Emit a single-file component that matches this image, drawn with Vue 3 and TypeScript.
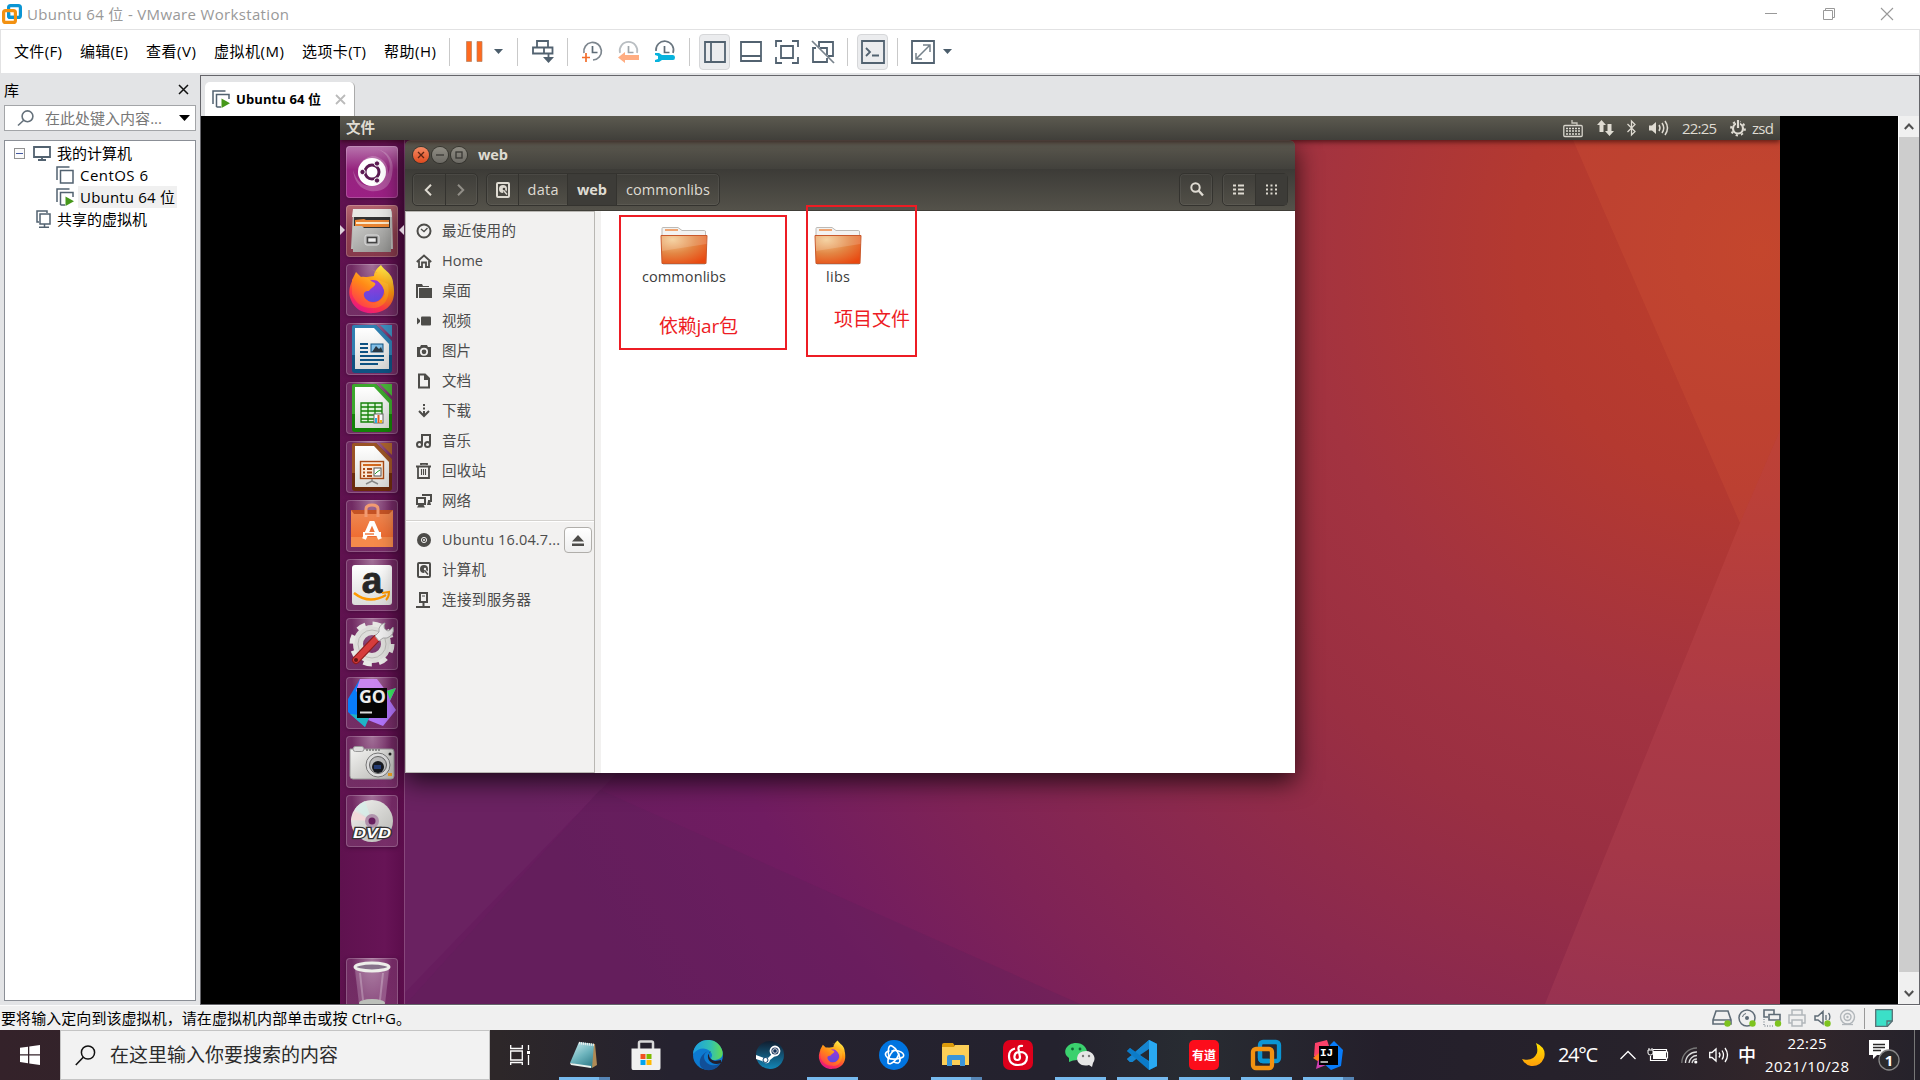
<script setup lang="ts">
import { h } from 'vue'

interface Glyph { w: number; h: number; body: string }
interface Placed { icon: string; gap: number; kind?: string }

const g = (w: number, h: number, body: string): Glyph => ({ w, h, body })
const line = 'fill="none" stroke="#526270" stroke-width="1.8"'
const dark = 'fill="none" stroke="#4d4c49" stroke-width="2"'
const pale = 'fill="none" stroke="#dfdbd2" stroke-width="2"'
const white = 'fill="none" stroke="#fff" stroke-width="1.3"'

const office = (c1: string, c2: string, inner: string) =>
  `<path d="M6 4Q6 2 8 2H30L46 18V47Q46 50 43 50H9Q6 50 6 47Z" fill="${c2}"/><path d="M6 4Q6 2 8 2H30L46 18V32H6Z" fill="${c1}" opacity=".75"/><path d="M34 2H46V14Z" fill="${c1}"/><path d="M9 5H28L43 21V46H9Z" fill="url(#paper)"/>${inner}`

const fox = '<path d="M25 4C30 7 32 10 32 14C38 17 43 22 45 28C50 9 39 8 34 0C30 3 27 7 27 11L6 14C2 22 1 28 4 35C8 45 17 49 27 48C40 47 48 38 47 25C47 15 42 9 38 6C37 9 37 12 38 15Z" fill="url(#fox)"/><circle cx="26" cy="26" r="11" fill="url(#foxball)"/><path d="M5 15L9 7L14 12C18 11 22 13 24 16L28 18C30 21 23 23 22 26C16 25 15 31 20 35C26 41 35 36 38 29C37 20 30 16 29 14L41 19C44 34 36 44 25 43C14 43 8 37 5 29Z" fill="url(#fox2)"/>'

const glyphs: Record<string, Glyph> = {
  vm: g(20, 20, '<rect x="6.6" y="1.6" width="11.8" height="11.8" rx="2" fill="none" stroke="#0b95d3" stroke-width="3.2"/><rect x="1.6" y="6.6" width="11.8" height="11.8" rx="2" fill="none" stroke="#f29111" stroke-width="3.2"/><path d="M6.6 9V11.4Q6.6 13.4 8.6 13.4H12" fill="none" stroke="#0b95d3" stroke-width="3.2"/>'),
  min: g(12, 12, '<path d="M0 5.5H12" stroke="#999"/>'),
  max: g(12, 12, '<path d="M.5 2.5H9.5V11.5H.5ZM2.5 2V.5H11.5V9.5H10" fill="none" stroke="#999"/>'),
  close: g(12, 12, '<path d="M0 0L12 12M12 0L0 12" stroke="#999" stroke-width="1.1"/>'),
  pause: g(17, 21, '<path d="M.5 .5H5.5V20.5H.5ZM11 .5H16V20.5H11Z" fill="#ff6a1f" stroke="#b5805f" stroke-width=".7"/>'),
  caret: g(9, 5, '<path d="M0 0H9L4.5 5Z" fill="#4b5d6b"/>'),
  send: g(22, 23, `<path d="M5 7V1H16V7M1 7.5H20.5V13.5H1ZM12 8V13M16.5 14V21" ${line}/><path d="M11 17H22L16.5 23Z" fill="#4f5f6d"/>`),
  snap: g(21, 22, '<path d="M2 12A8.8 8.8 0 1 1 11 19" fill="none" stroke="#7d868e" stroke-width="1.7"/><path d="M10.5 5V11.5H15.5" fill="none" stroke="#5d6b76" stroke-width="1.7"/><path d="M0 16.5H8M4 12V21" stroke="#f26d2b" stroke-width="1.7"/>'),
  revert: g(21, 22, '<path d="M2 12A8.8 8.8 0 1 1 19 12" fill="none" stroke="#b9bec2" stroke-width="1.7"/><path d="M10.5 5V11.5H15.5" fill="none" stroke="#9ea5aa" stroke-width="1.7"/><path d="M0 16.5L7 11V14H21V19H7V22Z" fill="#ffad82"/>'),
  manage: g(21, 22, '<path d="M2 10A8.8 8.8 0 1 1 19 12" fill="none" stroke="#69757f" stroke-width="1.7"/><path d="M10.5 5V11.5H15.5" fill="none" stroke="#5d6b76" stroke-width="1.7"/><path d="M1 12H5L8 14H19Q21 14 21 16.500T19 19H8L5 21H1V19L4 18V15L1 14Z" fill="#07b3dd"/>'),
  lib: g(22, 22, `<path d="M1 1H21V21H1ZM7 1V21" ${line}/>`),
  thumb: g(22, 22, `<path d="M1 1H21V20H1ZM1 15H21" ${line}/>`),
  full: g(24, 24, `<path d="M1 7V1H7M17 1H23V7M23 17V23H17M7 23H1V17M6 6H18V18H6Z" ${line}/>`),
  unity: g(24, 24, `<path d="M8 7V2H22V16H17M5 8H2V22H16V18M9 8H16V15" ${line}/><path d="M1 1L23 23" stroke="#78838c" stroke-width="1.7"/>`),
  console: g(24, 24, `<path d="M1 1H23V23H1ZM5 8L9 12L5 16M11 15.500H18" ${line}/>`),
  stretch: g(24, 24, `<path d="M1 1H23V23H1Z" ${line}/><path d="M5 19L19 5M12 5H19V12M5 13V19H11" fill="none" stroke="#75818a" stroke-width="1.5"/>`),
  x: g(9, 9, '<path d="M0 0L9 9M9 0L0 9" stroke="#111" stroke-width="1.5"/>'),
  tabx: g(9, 9, '<path d="M0 0L9 9M9 0L0 9" stroke="#bbb" stroke-width="1.8"/>'),
  lens: g(17, 16, '<circle cx="10.5" cy="6.300" r="5.400" fill="none" stroke="#65717b" stroke-width="1.6"/><path d="M7 10L1 15.500" stroke="#65717b" stroke-width="1.600"/>'),
  arrow: g(11, 6, '<path d="M0 0H11L5.5 6Z" fill="#000"/>'),
  minus: g(11, 11, '<rect x=".5" y=".5" width="10" height="10" fill="#fafafa" stroke="#919191"/><path d="M2 5.500H9" stroke="#4257a0"/>'),
  pc: g(18, 15, `<path d="M1 1H17V11H1ZM9 11V14M5 14H13" ${line}/>`),
  guest: g(18, 18, '<path d="M1 14V1H13.500M4.500 4.500H17V17H4.500Z" fill="none" stroke="#526270" stroke-width="1.500"/>'),
  guestOn: g(18, 18, '<path d="M1 14V1H13.500M4.500 17V4.500H17V9M4.500 17H9" fill="none" stroke="#526270" stroke-width="1.500"/><path d="M9.500 8.500L18 13.300L9.500 18Z" fill="#46981a"/>'),
  shared: g(15, 18, '<path d="M3 12H1V1H11V3M4 4H14V14H4ZM8.500 14V17M3 17.200H13" fill="none" stroke="#526270" stroke-width="1.500"/>'),
  // guest panel
  kbd: g(20, 18, '<path d="M9 1V4H14V6" fill="none" stroke="#c9c6bd" stroke-width="1.300"/><rect x=".8" y="6.500" width="18.400" height="11" rx="1" fill="#4a4943" stroke="#d7d4cb" stroke-width="1.300"/><path d="M3 9.500H17M3 12H17M3 15H17" stroke="#dedbd2" stroke-width="1.600" stroke-dasharray="2 1"/>'),
  net: g(17, 16, '<path d="M4.500 0L9 5H6.500V12H2.500V5H0ZM12.500 16L8 11H10.500V4H14.500V11H17Z" fill="#dfdbd2"/>'),
  bt: g(9, 16, '<path d="M.5 4L8 11.500L4.500 15V1L8 4.500L.5 12" fill="none" stroke="#dfdbd2" stroke-width="1.300"/>'),
  sound: g(20, 16, '<path d="M0 5.500H3L7 2V14L3 10.500H0Z" fill="#dfdbd2"/><path d="M10 5Q12 8 10 11M13 3Q16.500 8 13 13M16 1Q21 8 16 15" fill="none" stroke="#dfdbd2" stroke-width="1.500"/>'),
  gear: g(16, 16, '<circle cx="8" cy="8.500" r="5" fill="none" stroke="#dfdbd2" stroke-width="2.200"/><circle cx="8" cy="8.500" r="6.900" fill="none" stroke="#dfdbd2" stroke-width="2" stroke-dasharray="2.300 3.100"/><path d="M6 0H10V8H6Z" fill="#4f4d46"/><path d="M8 0V8" stroke="#dfdbd2" stroke-width="2.200"/>'),
  back: g(8, 12, `<path d="M7 .8L1.800 6L7 11.200" ${pale}/>`),
  next: g(8, 12, '<path d="M1 .8L6.200 6L1 11.200" fill="none" stroke="#918e87" stroke-width="2"/>'),
  disk: g(14, 16, `<rect x="1" y="1" width="12" height="14" rx="1" ${pale}/><circle cx="7" cy="7" r="4" fill="#dfdbd2"/><circle cx="8" cy="7" r="1.300" fill="#45433e"/><path d="M8 9L11 12.500" stroke="#45433e" stroke-width="3"/><path d="M8 9L11 12.500" stroke="#dfdbd2" stroke-width="1.500"/>`),
  find: g(14, 15, `<circle cx="5.500" cy="5.500" r="4.200" ${pale}/><path d="M8.500 8.500L13 13.500" stroke="#dfdbd2" stroke-width="2.400"/>`),
  list: g(11, 11, '<path d="M0 1.500H3M0 5.500H3M0 9.500H3M5 1.500H11M5 5.500H11M5 9.500H11" stroke="#dfdbd2" stroke-width="2"/>'),
  dots: g(11, 11, '<path d="M0 1.500H11M0 5.500H11M0 9.500H11" stroke="#dfdbd2" stroke-width="2" stroke-dasharray="2 2.500"/>'),
  // places
  recent: g(16, 16, '<circle cx="8" cy="8" r="6.500" fill="none" stroke="#4d4c49" stroke-width="2"/><path d="M5 6L8 8.500L11.500 5" fill="none" stroke="#4d4c49" stroke-width="1.300"/>'),
  home: g(16, 16, '<path d="M.8 9L8 2.500L15.200 9" fill="none" stroke="#4d4c49" stroke-width="1.800"/><path d="M3 8V14H6V9.500H10V14H13V8" fill="none" stroke="#4d4c49" stroke-width="1.800"/>'),
  desk: g(16, 16, '<path d="M0 1H6L7 3H13V4H2V15H0Z" fill="#4d4c49"/><path d="M3 5H16V15H3Z" fill="#4d4c49"/>'),
  video: g(16, 16, '<rect x="5" y="3.500" width="10" height="9" rx="1" fill="#4d4c49"/><path d="M1 4.500L4 7V9L1 11.500Z" fill="#4d4c49"/>'),
  photo: g(16, 16, '<path d="M1 4H4L5 2H11L12 4H15V14H1Z" fill="#4d4c49"/><circle cx="8" cy="8.800" r="3.200" fill="none" stroke="#f2f1f0" stroke-width="1.700"/>'),
  doc: g(16, 16, `<path d="M3 1.500H9L13 5.500V14.500H3Z" ${dark}/><path d="M8 1H9L14 6V7H8Z" fill="#4d4c49"/>`),
  down: g(16, 16, `<path d="M3 8L8 13L13 8" ${dark}/><path d="M8 1V3M8 4.500V6.500M8 8V13" ${dark}/>`),
  music: g(16, 16, `<circle cx="3.500" cy="11.500" r="2.500" ${dark}/><circle cx="11.500" cy="11.500" r="2.500" ${dark}/><path d="M6 11V2H14V11" ${dark}/>`),
  bin: g(16, 16, '<path d="M5 2V.8H11V2M0 3.500H15M2 4V15H13V4" fill="none" stroke="#4d4c49" stroke-width="1.800"/><path d="M5.500 6V12M7.500 6V12M9.500 6V12" stroke="#4d4c49" stroke-width="1.100"/>'),
  lan: g(16, 16, '<path d="M7 3V2H15V8H12M1 5H9V11H1Z" fill="none" stroke="#4d4c49" stroke-width="2"/><path d="M3 11H7L9 14.500H1ZM12 8H14L15 12H11Z" fill="#4d4c49"/>'),
  cd: g(16, 16, '<circle cx="8" cy="8" r="7" fill="#4d4c49"/><circle cx="8" cy="8" r="2.600" fill="none" stroke="#f2f1f0"/><circle cx="8" cy="8" r="1" fill="#f2f1f0"/>'),
  hdd: g(16, 16, `<rect x="2" y="1" width="12" height="14" rx="1" ${dark}/><circle cx="8" cy="7" r="4" fill="#4d4c49"/><circle cx="9" cy="7" r="1.200" fill="#f2f1f0"/><path d="M9 9L12 12" stroke="#f2f1f0" stroke-width="3"/><path d="M9 9L12 12.500" stroke="#4d4c49" stroke-width="1.500"/>`),
  server: g(16, 16, `<path d="M4 1H11V10H4ZM7.500 10V14M0 15H14" ${dark}/><path d="M6 4H9" stroke="#4d4c49"/>`),
  eject: g(12, 11, '<path d="M6 0L12 6.500H0ZM0 8.500H12V11H0Z" fill="#4d4c49"/>'),
  folder: g(48, 39, '<path d="M2 9V1.500Q2 .5 3 .5H18L22 3.500H44.500Q45.500 3.500 45.500 5V12H2Z" fill="#f3f3f2" stroke="#bdbab6"/><path d="M5 3H18" stroke="#f0a572" stroke-width="2"/><path d="M3 36.500H45V38H3Z" fill="#bbb" opacity=".6"/><path d="M1 8.500H47L46 36.500H2Z" fill="url(#folder)" stroke="#c9592c"/><path d="M1.500 9H46.500V17L2 24Z" fill="#fff" opacity=".16"/>'),
  // launcher
  ubuntu: g(52, 52, '<path d="M26 10A16 16 0 0 1 42 28A18 18 0 0 0 31 3Q50 8 46 29Q43 47 24 45Q9 42 7 24Q12 40 24 40Q9 34 13 22Q17 11 26 10Z" fill="#fff" opacity=".22"/><circle cx="26" cy="26" r="14" fill="#fff"/><circle cx="26" cy="26" r="7" fill="none" stroke="#5b1a52" stroke-width="3"/><g fill="#5b1a52" stroke="#fff"><circle cx="16.500" cy="26" r="2.700"/><circle cx="31" cy="17.500" r="2.700"/><circle cx="31" cy="34.500" r="2.700"/></g>'),
  files: g(52, 52, '<path d="M7 6Q7 4 9 4H43Q45 4 46 7L47 44H5Z" fill="#b9b9b7"/><path d="M7 4H45L46 12H6Z" fill="#e8e8e5"/><path d="M8 12H44V24H8Z" fill="#333"/><path d="M9 15L18 14L20 15H43V22H9Z" fill="#e98533"/><path d="M10 17H43V19H10Z" fill="#fbe8ca"/><path d="M7 21H16L18 23H45V47H7Z" fill="url(#steel)"/><rect x="19" y="30" width="14" height="10" rx="2" fill="#aaa" stroke="#ddd"/><rect x="21.500" y="32.500" width="9" height="5" fill="#eee" stroke="#444" stroke-width="1.500"/>'),
  firefox: g(52, 52, `<g transform="translate(1 1)">${fox}</g>`),
  writer: g(52, 52, office('#3c8fc0', '#0e5282', '<path d="M14 21H22M14 25H22M14 29H22M14 33H38M14 37H38M14 41H32" stroke="#0e5282" stroke-width="2"/><rect x="25" y="21" width="12" height="8" fill="#83c0e8" stroke="#0e5282"/><path d="M26 29L30 23L33 26L35 24L37 29Z" fill="#2b3944"/>')),
  calc: g(52, 52, office('#49b539', '#148108', '<path d="M15 21H36V40H15ZM15 25H36M15 29H36M15 33H36M15 37H36M22 21V40M29 21V40" fill="#dff3da" stroke="#148108" stroke-width="1.300"/><rect x="28" y="32" width="9" height="9" fill="#fff" stroke="#666"/><path d="M30 41V36" stroke="#29abe2" stroke-width="2"/><path d="M32.500 41V33" stroke="#df6020" stroke-width="2"/><path d="M35 41V38" stroke="#f1b51b" stroke-width="2"/>')),
  impress: g(52, 52, office('#aa622d', '#6c2b0c', '<rect x="14.500" y="20.500" width="23" height="17" fill="#fae7d5" stroke="#a94a16" stroke-width="1.400"/><path d="M17 24H35" stroke="#d2691e" stroke-width="2"/><path d="M17 28H26M17 31.500H26M17 35H26" stroke="#a94a16" stroke-width="2" stroke-dasharray="2 2 9"/><rect x="28" y="27" width="7" height="8" fill="#fff" stroke="#555"/><path d="M29 33L31 31L34 29" fill="none" stroke="#27a02b"/><path d="M26 38V40L20 43M26 40L32 43" fill="none" stroke="#888" stroke-width="1.500"/>')),
  store: g(52, 52, '<path d="M5 10H47V47H5Z" fill="url(#bag)"/><path d="M5 10H47L43 14H8Z" fill="#c45325"/><path d="M20 17V9Q20 5 26 5T32 9V17" fill="none" stroke="#f29b72" stroke-width="3"/><path d="M5 37H47V47H5Z" fill="#f58a4b"/><path d="M18 39L25 23H27L34 39" fill="none" stroke="#fff" stroke-width="4"/><path d="M17 34H35" stroke="#fff" stroke-width="4"/><path d="M19 34H28" stroke="#ed6a28" stroke-width="1.300"/>'),
  amazon: g(52, 52, '<rect x="6" y="6" width="40" height="40" rx="3" fill="url(#paper)"/><text x="26" y="33.500" text-anchor="middle" font-family="Liberation Sans" font-weight="700" font-size="37" fill="#272727" stroke="#272727" stroke-width=".8">a</text><path d="M8 34Q23 46 40 36" fill="none" stroke="#f90" stroke-width="2.500"/><path d="M36 34L43 33Q43 38 40 41" fill="none" stroke="#f90" stroke-width="2"/>'),
  tools: g(52, 52, '<circle cx="26" cy="26" r="14" fill="none" stroke="#dededb" stroke-width="10"/><circle cx="26" cy="26" r="20" fill="none" stroke="#e8e8e5" stroke-width="5" stroke-dasharray="8.500 7.200"/><circle cx="26" cy="26" r="14" fill="none" stroke="#bcbcb8"/><path d="M30 21L10 42" stroke="#8f1d1d" stroke-width="8" stroke-linecap="round"/><path d="M30 21L10 42" stroke="#d63c3c" stroke-width="5.800" stroke-linecap="round"/><path d="M29 18L33 14Q32 7 39 5Q36 11 42 13Q45 12 47 9Q49 17 41 20L37 20L33 23Z" fill="#eee" stroke="#aaa"/><circle cx="10" cy="42" r="2" fill="#641515"/>'),
  goland: g(52, 52, '<path d="M2 22L14 2H29L24 34L19 50L2 35Z" fill="#087cfa"/><path d="M14 2H31L40 14L28 30L10 14Z" fill="#c986ef"/><path d="M36 15L50 11L44 24L50 33L37 49L22 43Z" fill="#b074f9"/><path d="M41 14L50 11L44 23Z" fill="#3bea62"/><path d="M4 37L24 39L19 50Z" fill="#20b5c5"/><path d="M11 11H41V41H11Z" fill="#050505"/><text x="13" y="26" font-family="Open Sans" font-weight="700" font-size="17.500" textLength="27" lengthAdjust="spacingAndGlyphs" fill="#eee">GO</text><path d="M14 35.500H26" stroke="#ddd" stroke-width="2"/>'),
  camera: g(52, 52, '<path d="M4 13H46Q48 13 48 16V40Q48 43 45 43H7Q4 43 4 40Z" fill="url(#steel2)" stroke="#999"/><rect x="7" y="10.500" width="11" height="5" rx="2.500" fill="#ddd" stroke="#999"/><path d="M20 14H35" stroke="#777" stroke-width="1.500" stroke-dasharray="2 1"/><circle cx="32" cy="29" r="12" fill="#ddd" stroke="#777"/><circle cx="32" cy="29" r="8.500" fill="#bbb" stroke="#666"/><circle cx="32" cy="31" r="6" fill="#17191f"/><path d="M28 29H35V33H28Z" fill="#253c74"/><circle cx="44" cy="18" r="1.500" fill="#222"/><path d="M42 37H46V40H42Z" fill="#eb9e24"/>'),
  dvd: g(52, 52, '<circle cx="26" cy="26" r="21" fill="url(#steel2)"/><path d="M26 26L9 14Q13 9 19 6Z" fill="#d4f0ea" opacity=".7"/><path d="M26 26L8 16L5 25Z" fill="#f2d9d9"/><circle cx="26" cy="26" r="7" fill="#b093ac"/><circle cx="26" cy="26" r="3.500" fill="#692160"/><text x="7" y="43" font-family="Liberation Sans" font-weight="700" font-style="italic" font-size="15" textLength="38" lengthAdjust="spacingAndGlyphs" fill="#fff" stroke="#333" stroke-width="2.500" paint-order="stroke">DVD</text>'),
  trash: g(52, 52, '<path d="M9 12L13 46H39L43 12Z" fill="#d7bdd4" opacity=".3"/><ellipse cx="26" cy="9" rx="17" ry="4" fill="#87718a" stroke="#eeeeea" stroke-width="3"/><ellipse cx="26" cy="45" rx="13" ry="4" fill="#bcc0ba"/><path d="M14 15L17 42M37 15L34 42" stroke="#fff" opacity=".25" stroke-width="2"/>'),
  // host taskbar
  start: g(20, 20, '<path d="M0 2.800L8 1.700V9.300H0ZM9.300 1.500L20 0V9.300H9.300ZM0 10.500H8V18.200L0 17ZM9.300 10.500H20V20L9.300 18.400Z" fill="#fff"/>'),
  tbLens: g(21, 21, '<circle cx="13" cy="7.500" r="6.600" fill="none" stroke="#111" stroke-width="1.500"/><path d="M8.500 12L.8 20" stroke="#111" stroke-width="1.600"/>'),
  view: g(20, 20, `<path d="M.7 0V3.500H12.300V0M.7 6H12.300V15H.7ZM.7 20V17.500H12.300V20M18.500 0V5M18.500 10V20" ${white}/><path d="M17 6H20V9H17Z" fill="#fff"/>`),
  note: g(30, 30, '<path d="M10 3L26 4L28 25L23 28Z" fill="#af8a55"/><path d="M10 2L25 4L23 28L1 23Z" fill="url(#note)"/><path d="M10 3L25 5" stroke="#eee" stroke-width="2.500" stroke-dasharray="1 1"/><path d="M1 23L22 26V28L2 25Z" fill="#e9f2ee"/>'),
  shop: g(30, 30, '<path d="M8 9V3Q8 1.500 9.500 1.500H20.500Q22 1.500 22 3V9" fill="none" stroke="#d9d9d9" stroke-width="2.500"/><path d="M.5 8.500H29.500V28Q29.500 30 28 30H2Q.5 30 .5 28Z" fill="#f0f0f0"/><path d="M9.500 14H14.500V19H9.500Z" fill="#f25022"/><path d="M15.500 14H20.500V19H15.500Z" fill="#7fba00"/><path d="M9.500 20H14.500V25H9.500Z" fill="#00a4ef"/><path d="M15.500 20H20.500V25H15.500Z" fill="#ffb900"/>'),
  edge: g(30, 30, '<circle cx="15" cy="15" r="15" fill="#0d7ad0"/><path d="M0 14C1-2 21-4 27 6C33 15 28 20 21 20C17 20 18 18 19 16C20 11 9 3 0 14Z" fill="url(#edge)"/><path d="M17 11C8 12 10 23 18 25C23 26 27 24 28 22C24 31 14 32 9 28C4 23 8 12 17 11Z" fill="#114f98"/><path d="M18 11C14 13 16 20 22 21L28 20V23C20 26 14 21 15 15Z" fill="#231f2d"/>'),
  steam: g(30, 30, '<circle cx="15" cy="15" r="14" fill="url(#steam)"/><circle cx="20" cy="11" r="4.500" fill="#15335c" stroke="#fff" stroke-width="1.800"/><circle cx="20" cy="11" r="2.300" fill="none" stroke="#ddd"/><path d="M1 15L9 18Q12 17 13 18L17 14L20 16L15 20Q14 24 10 23L7 21L1 19Z" fill="#fff"/><circle cx="10.500" cy="20" r="2.500" fill="none" stroke="#17466f" stroke-width="1"/>'),
  fox30: g(30, 30, `<g transform="translate(.5 .5) scale(.59)">${fox}</g>`),
  bnet: g(30, 30, '<circle cx="15" cy="15" r="15" fill="#0074e0"/><g fill="none" stroke="#fff" stroke-width="1.600" stroke-linecap="round"><path d="M10 17C8 10 10 4 13 6C17 8 21 15 21 20"/><path d="M13 11C20 9 27 14 24 17C21 19 13 20 9 18"/><path d="M20 14C18 20 11 26 9 23C8 20 11 14 15 10"/><path d="M10 11C6 12 5 15 9 18M21 20C21 23 19 24 15 22"/></g>'),
  explorer: g(30, 30, '<path d="M1 5Q1 3 3 3H12L14 6V11H1Z" fill="#dc9b0a"/><path d="M14 5H28V25H1V7H13Z" fill="#fccf57"/><path d="M6 26V17Q6 15 8 15H22Q24 15 24 17V26H19V20H11V26Z" fill="#3a95da"/>'),
  cloud: g(30, 30, '<rect width="30" height="30" rx="7" fill="#dd001b"/><path d="M20 6Q15 5 15.500 9L17 17Q17 20 14.500 20Q11 20 11.500 16Q12 12 17 12Q23 12 24 17Q24 25 15 25Q6 25 6 16Q6 10 12 8.500" fill="none" stroke="#fff" stroke-width="2.200"/>'),
  wechat: g(30, 30, '<path d="M11 3C18 3 22 8 22 12Q14 12 12 20Q8 20 4 22L4 18C-4 12 2 3 11 3Z" fill="#3bd16e"/><circle cx="7.500" cy="9" r="1.400" fill="#116736"/><circle cx="15" cy="9" r="1.400" fill="#116736"/><path d="M21 11C28 11 32 18 28 23L27 27L24 25C17 27 12 23 12 18Q13 11 21 11Z" fill="#e6e6e6"/><circle cx="18" cy="16" r="1.200" fill="#777"/><circle cx="24" cy="16" r="1.200" fill="#777"/>'),
  code: g(30, 30, '<path d="M22 0L30 4V26L22 30L0 11L3 8L22 22V0Z" fill="#0876c4"/><path d="M22 0L30 4V26L22 30V22L3 22L0 19L22 0Z" fill="#1685cf"/><path d="M0 19L3 22L22 8V0Z" fill="#1685cf"/><path d="M22 0L30 4V26L22 30Z" fill="#29a9f2"/><path d="M22 9V21L13 15ZM0 13.500L5 15L0 17ZM5 22.500L11 17.500L22 25V30Z" fill="#252a32"/><path d="M0 11L3 8L22 22V30Z" fill="#0b7bc8"/>'),
  youdao: g(30, 30, '<rect width="30" height="30" rx="5" fill="#fc0d1b"/><text x="3" y="19.500" font-family="Noto Sans CJK SC" font-weight="700" font-size="12" textLength="24" fill="#fff">有道</text>'),
  idea: g(30, 30, '<path d="M2 3L14 0L18 12L6 20L1 16Z" fill="#fb4169"/><path d="M0 18L6 13V22Z" fill="#fc801d"/><path d="M5 20L18 23L3 29Z" fill="#ce3eb0"/><path d="M17 5L21 1L30 10L28 26L18 30L10 23Z" fill="#087cfa"/><path d="M6 6H25V25H6Z"/><text x="7" y="16" font-family="Liberation Mono" font-weight="700" font-size="11" fill="#fff">IJ</text><path d="M7.500 22H15" stroke="#eee" stroke-width="1.400"/>'),
  vm30: g(30, 30, '<rect x="9" y="2" width="19" height="19" rx="3" fill="none" stroke="#0b95d3" stroke-width="4.300"/><rect x="2" y="9" width="19" height="19" rx="3" fill="none" stroke="#f29111" stroke-width="4.300"/><path d="M9 12V18Q9 21 12 21H18" fill="none" stroke="#0b95d3" stroke-width="4.300"/>'),
  moon: g(24, 24, '<path d="M14 0Q25 5 22 15Q18 24 9 23Q3 22 0 16Q11 19 15 10Q16 5 14 0Z" fill="url(#moon)"/>'),
  up: g(16, 10, `<path d="M.5 9L8 1.500L15.500 9" ${white}/>`),
  batt: g(20, 14, '<path d="M5 3H18V11H5Z" fill="#fff"/><path d="M5 1.500H18.500V4H19.500V10H18.500V12.500H2.500V8" fill="none" stroke="#fff" stroke-width="1.200"/><path d="M0 2H5V5Q5 7 2.500 7T0 5ZM1 0V2M4 0V2" fill="#242127" stroke="#fff" stroke-width="1"/>'),
  wifi: g(17, 17, '<path d="M.8 16A15 15 0 0 1 16 1" fill="none" stroke="#777" stroke-width="1.300"/><path d="M4.500 16A11 11 0 0 1 16 5M8 16A8 8 0 0 1 16 8.500M11 16A5 5 0 0 1 16 12" fill="none" stroke="#ddd" stroke-width="1.300"/><circle cx="14.800" cy="15" r="1.600" fill="#fff"/>'),
  vol: g(21, 16, `<path d="M.7 5.500H3L7 2V14L3 10.500H.7ZM10 5.500Q12 8 10 10.500M13 3.500Q16 8 13 12.500M16 1Q21 8 16 15" ${white}/>`),
  notif: g(31, 31, '<path d="M0 0H20V15H8L4 19V15H0Z" fill="#fff"/><path d="M4 4.500H16M4 7.500H16M4 10.500H12" stroke="#2a2929" stroke-width="1.400"/><circle cx="20" cy="20" r="10" fill="#2b2b2d" stroke="#888" stroke-width="1.300"/><text x="20" y="25.500" text-anchor="middle" font-family="Open Sans" font-size="15" font-weight="700" fill="#fff">1</text>'),
  // device status
  dHdd: g(20, 18, '<path d="M4 2H16L19 11V15H1V11ZM1 11H19" fill="none" stroke="#5e6b76" stroke-width="1.600"/><circle cx="15.500" cy="14.500" r="3.200" fill="#7dc31e"/>'),
  dCd: g(19, 18, '<circle cx="9" cy="9" r="8" fill="none" stroke="#5e6b76" stroke-width="1.500"/><circle cx="9" cy="9" r="2" fill="#5e6b76"/><path d="M4.500 8Q5 5 8 4.500" fill="none" stroke="#5e6b76"/><circle cx="14.500" cy="14.500" r="3.200" fill="#7dc31e"/>'),
  dNet: g(19, 18, '<path d="M5 8H1V1H11V5M6 5.500H17V11H6Z" fill="none" stroke="#5e6b76" stroke-width="1.600"/><path d="M1 10V17H11" fill="none" stroke="#5e6b76" stroke-dasharray="1 1.500"/><circle cx="15" cy="14.500" r="3.200" fill="#7dc31e"/>'),
  dPrint: g(18, 18, '<path d="M4 6V1H14V6M4 14H1V6H17V14H14M4 11H14V17H4Z" fill="none" stroke="#b1b6ba" stroke-width="1.500"/>'),
  dSound: g(18, 18, '<path d="M1 7H4L9 2.500V15L4 11H1Z" fill="none" stroke="#5e6b76" stroke-width="1.500"/><path d="M12 6V11M14.500 4Q17 7 15 11" fill="none" stroke="#5e6b76" stroke-width="1.300"/><circle cx="13.500" cy="14.500" r="3.200" fill="#7dc31e"/>'),
  dCam: g(17, 18, '<circle cx="8.500" cy="8" r="7" fill="none" stroke="#b1b6ba" stroke-width="1.400"/><circle cx="8.500" cy="8" r="3.500" fill="none" stroke="#b1b6ba" stroke-width="1.400"/><circle cx="8.500" cy="8" r="1.200" fill="#b1b6ba"/><path d="M3 15.500H14" stroke="#b1b6ba" stroke-width="1.300"/>'),
  dNote: g(18, 18, '<path d="M.7 .7H17.300V12L12.500 17.300H.7Z" fill="#3be0c8" stroke="#5a7075" stroke-width="1.300"/><path d="M12 17.500V12H17.500" fill="none" stroke="#5a7075" stroke-width="1.300"/>'),
  sUp: g(10, 7, '<path d="M.8 6L5 1.500L9.200 6" fill="none" stroke="#505050" stroke-width="2"/>'),
  sDown: g(10, 7, '<path d="M.8 1L5 5.500L9.200 1" fill="none" stroke="#505050" stroke-width="2"/>'),
}

const Ico = (p: { n: string }) => {
  const it = glyphs[p.n]
  return h('svg', { width: it.w, height: it.h, viewBox: `0 0 ${it.w} ${it.h}`, class: 'ico', innerHTML: it.body })
}
Ico.props = ['n']

// Tracks a label out (or in) so that its drawn width equals the given one.
const vFit = {
  mounted(el: HTMLElement, b: { value: number }) {
    const n = Array.from(el.textContent ?? '').length
    const natural = el.getBoundingClientRect().width
    const step = n > 1 ? (b.value - natural) / (n - 1) : 0
    el.style.letterSpacing = `${step}px`
    el.style.marginRight = `${-step}px`
  },
}

const menus: [string, number][] = [['文件(F)', 48], ['编辑(E)', 48], ['查看(V)', 50], ['虚拟机(M)', 70], ['选项卡(T)', 64], ['帮助(H)', 52]]
const tools: Placed[] = [
  { icon: '', gap: 13, kind: 'bar' }, { icon: 'pause', gap: 16 }, { icon: 'caret', gap: 11 }, { icon: '', gap: 14, kind: 'bar' },
  { icon: 'send', gap: 14 }, { icon: '', gap: 13, kind: 'bar' }, { icon: 'snap', gap: 14 }, { icon: 'revert', gap: 15 }, { icon: 'manage', gap: 15 },
  { icon: '', gap: 14, kind: 'bar' }, { icon: 'lib', gap: 9, kind: 'on' }, { icon: 'thumb', gap: 10 }, { icon: 'full', gap: 13 }, { icon: 'unity', gap: 12 },
  { icon: '', gap: 12, kind: 'bar' }, { icon: 'console', gap: 9, kind: 'on' }, { icon: '', gap: 9, kind: 'bar' }, { icon: 'stretch', gap: 13 }, { icon: 'caret', gap: 8 },
]
const launcher = ['ubuntu', 'files', 'firefox', 'writer', 'calc', 'impress', 'store', 'amazon', 'tools', 'goland', 'camera', 'dvd']
const places: [string, string, number][] = [
  ['recent', '最近使用的', 74], ['home', 'Home', 41], ['desk', '桌面', 29], ['video', '视频', 29], ['photo', '图片', 29],
  ['doc', '文档', 29], ['down', '下载', 29], ['music', '音乐', 29], ['bin', '回收站', 44], ['lan', '网络', 29],
]
const apps: [string, string][] = [
  ['note', 'run multi'], ['shop', ''], ['edge', ''], ['steam', ''], ['fox30', 'run'], ['bnet', ''], ['explorer', 'run multi'],
  ['cloud', ''], ['wechat', 'run'], ['code', 'run'], ['youdao', 'run'], ['vm30', 'run'], ['idea', 'run multi'],
]
const devices: Placed[] = [
  { icon: 'dHdd', gap: 0 }, { icon: 'dCd', gap: 6 }, { icon: 'dNet', gap: 6 }, { icon: 'dPrint', gap: 6 },
  { icon: 'dSound', gap: 8 }, { icon: 'dCam', gap: 7 }, { icon: '', gap: 8, kind: 'bar' }, { icon: 'dNote', gap: 10 },
]
</script>

<template>
  <svg class="defs" width="0" height="0">
    <defs>
      <linearGradient id="paper" x2="0" y2="1"><stop stop-color="#fff" /><stop offset="1" stop-color="#dcdcda" /></linearGradient>
      <linearGradient id="steel" x2="1" y2="1"><stop stop-color="#c8c8c6" /><stop offset="1" stop-color="#8f8f8d" /></linearGradient>
      <linearGradient id="steel2" x2="1" y2="1"><stop stop-color="#f3f3f1" /><stop offset="1" stop-color="#b6b6b2" /></linearGradient>
      <linearGradient id="bag" x2="0" y2="1"><stop stop-color="#ee8a54" /><stop offset="1" stop-color="#ef6226" /></linearGradient>
      <linearGradient id="fox" x1=".8" x2=".3" y2="1"><stop stop-color="#fff44f" /><stop offset=".4" stop-color="#ff980e" /><stop offset=".75" stop-color="#ff3647" /><stop offset="1" stop-color="#e31587" /></linearGradient>
      <linearGradient id="fox2" x1=".9" x2=".2" y2="1"><stop stop-color="#ffd83a" /><stop offset=".5" stop-color="#ff8a16" /><stop offset="1" stop-color="#ff3750" /></linearGradient>
      <linearGradient id="foxball" x2="0" y2="1"><stop stop-color="#a238d5" /><stop offset="1" stop-color="#5b4be0" /></linearGradient>
      <radialGradient id="folder" cx=".25" cy=".15" r="1"><stop stop-color="#f3cb92" /><stop offset=".5" stop-color="#e38644" /><stop offset="1" stop-color="#e9480f" /></radialGradient>
      <linearGradient id="note" x2=".6" y2="1"><stop stop-color="#d2eef0" /><stop offset=".6" stop-color="#6db4bd" /><stop offset="1" stop-color="#3b8692" /></linearGradient>
      <linearGradient id="edge"><stop stop-color="#1b9de2" /><stop offset=".6" stop-color="#33c0b0" /><stop offset="1" stop-color="#63db50" /></linearGradient>
      <linearGradient id="steam" x2="0" y2="1"><stop stop-color="#111d2e" /><stop offset="1" stop-color="#1387b8" /></linearGradient>
      <linearGradient id="moon" x2="0" y2="1"><stop stop-color="#ffe600" /><stop offset="1" stop-color="#ff9d0a" /></linearGradient>
    </defs>
  </svg>
  <div class="screen">
    <header class="titlebar">
      <Ico n="vm" /><span v-fit="262" class="caption">Ubuntu 64 位 - VMware Workstation</span>
      <div class="controls"><Ico n="min" /><Ico n="max" /><Ico n="close" /></div>
    </header>
    <nav class="menubar">
      <div class="menus"><span v-for="[label, w] in menus" :key="label" v-fit="w">{{ label }}</span></div>
      <template v-for="(t, i) in tools" :key="i">
        <i v-if="t.kind === 'bar'" class="bar" :style="{ marginLeft: t.gap + 'px' }"></i>
        <span v-else class="tool" :class="t.kind" :style="{ marginLeft: t.gap + 'px' }"><Ico :n="t.icon" /></span>
      </template>
    </nav>

    <div class="work">
      <aside class="library">
        <div class="libhead"><span>库</span><Ico n="x" /></div>
        <div class="libsearch"><Ico n="lens" /><span v-fit="117">在此处键入内容...</span><Ico n="arrow" /></div>
        <div class="tree">
          <div class="node root"><Ico n="minus" /><Ico n="pc" /><span v-fit="75">我的计算机</span></div>
          <div class="node leaf"><Ico n="guest" /><span v-fit="68">CentOS 6</span></div>
          <div class="node leaf"><Ico n="guestOn" /><div class="sel"><span v-fit="95">Ubuntu 64 位</span></div></div>
          <div class="node share"><Ico n="shared" /><span v-fit="90">共享的虚拟机</span></div>
        </div>
      </aside>

      <section class="console">
        <div class="tabs"><div class="tab"><Ico n="guestOn" /><b v-fit="85">Ubuntu 64 位</b><Ico n="tabx" /></div></div>
        <div class="viewport">
          <div class="guest">
            <svg class="wall" width="1440" height="864" viewBox="340 140 1440 864">
              <defs>
                <radialGradient id="wall" gradientUnits="userSpaceOnUse" cx="1760" cy="250" r="1350">
                  <stop offset="0" stop-color="#bd3f2a" /><stop offset=".18" stop-color="#b43930" /><stop offset=".34" stop-color="#a33340" />
                  <stop offset=".46" stop-color="#9a2f42" /><stop offset=".6" stop-color="#8b294e" /><stop offset=".72" stop-color="#7f2356" />
                  <stop offset=".85" stop-color="#701c61" /><stop offset="1" stop-color="#671d5e" />
                </radialGradient>
              </defs>
              <rect x="340" y="140" width="1440" height="864" fill="url(#wall)" />
              <path d="M1573 140L1740 523L1780 430V140Z" fill="#ff8048" opacity=".11" />
              <path d="M1740 523L1780 430V1004H1545Z" fill="#ff8080" opacity=".1" />
              <path d="M340 1060L617 773H340Z" fill="#fff" opacity=".025" />
              <path d="M406 1004L600 790L1080 1004Z" fill="#5d2058" opacity=".3" />
            </svg>
            <div class="panel">
              <b class="appname">文件</b>
              <div class="indicators">
                <Ico n="kbd" /><Ico n="net" /><Ico n="bt" /><Ico n="sound" /><span v-fit="35">22:25</span><Ico n="gear" /><span v-fit="22">zsd</span>
              </div>
            </div>
            <div class="launcher">
              <div v-for="n in launcher" :key="n" class="tile" :class="n"><Ico :n="n" /></div>
              <div class="tile bottom"><Ico n="trash" /></div>
            </div>
            <div class="window">
              <div class="wtitle">
                <i class="wbtn red"><svg width="16" height="16"><path d="M5 5L11 11M11 5L5 11" stroke="#5b2413" stroke-width="1.300" /></svg></i>
                <i class="wbtn"><svg width="16" height="16"><path d="M4 8H12" stroke="#383733" stroke-width="1.300" /></svg></i>
                <i class="wbtn"><svg width="16" height="16"><rect x="5" y="5" width="6" height="6" fill="none" stroke="#383733" stroke-width="1.300" /></svg></i>
                <b v-fit="30">web</b>
              </div>
              <div class="wtools">
                <div class="group nav"><span><Ico n="back" /></span><span class="off"><Ico n="next" /></span></div>
                <div class="group path">
                  <span class="p1"><Ico n="disk" /></span><span class="p2"><em v-fit="31">data</em></span><span class="p3 down"><b v-fit="30">web</b></span><span class="p4"><em v-fit="84">commonlibs</em></span>
                </div>
                <div class="group search"><span><Ico n="find" /></span></div>
                <div class="group modes"><span><Ico n="list" /></span><span class="down"><Ico n="dots" /></span></div>
              </div>
              <div class="wbody">
                <div class="places">
                  <div v-for="[ic, label, w] in places" :key="label" class="place"><Ico :n="ic" /><span v-fit="w">{{ label }}</span></div>
                  <hr>
                  <div class="place"><Ico n="cd" /><span v-fit="118">Ubuntu 16.04.7...</span><button><Ico n="eject" /></button></div>
                  <div class="place"><Ico n="hdd" /><span v-fit="44">计算机</span></div>
                  <div class="place"><Ico n="server" /><span v-fit="89">连接到服务器</span></div>
                </div>
                <div class="filesview">
                  <div class="file"><Ico n="folder" /><span v-fit="84">commonlibs</span></div>
                  <div class="file"><Ico n="folder" /><span v-fit="24">libs</span></div>
                </div>
              </div>
              <div class="mark m1"><span v-fit="79">依赖jar包</span></div>
              <div class="mark m2"><span v-fit="76">项目文件</span></div>
            </div>
            <i class="arr l"></i><i class="arr r"></i>
          </div>
          <div class="scroll"><div class="sbtn"><Ico n="sUp" /></div><div class="thumb"></div><div class="sbtn"><Ico n="sDown" /></div></div>
        </div>
      </section>
    </div>

    <div class="status">
      <span v-fit="410">要将输入定向到该虚拟机，请在虚拟机内部单击或按 Ctrl+G。</span>
      <div class="devices">
        <template v-for="(d, i) in devices" :key="i">
          <i v-if="d.kind" class="dbar" :style="{ marginLeft: d.gap + 'px' }"></i>
          <Ico v-else :n="d.icon" :style="{ marginLeft: d.gap + 'px' }" />
        </template>
      </div>
    </div>

    <footer class="taskbar">
      <div class="start"><Ico n="start" /></div>
      <div class="tsearch"><Ico n="tbLens" /><span v-fit="228">在这里输入你要搜索的内容</span></div>
      <div class="taskview"><Ico n="view" /></div>
      <div v-for="[n, c] in apps" :key="n" class="app" :class="c"><Ico :n="n" /></div>
      <div class="tray">
        <Ico n="moon" /><span v-fit="40" class="temp">24°C</span><Ico n="up" /><Ico n="batt" /><Ico n="wifi" /><Ico n="vol" /><span class="ime">中</span>
        <div class="clock"><span v-fit="39">22:25</span><span v-fit="84">2021/10/28</span></div>
        <Ico n="notif" /><i class="peek"></i>
      </div>
    </footer>
  </div>
</template>

<style>
html, body { margin: 0; background: #fff; overflow: hidden; }
.ico { display: block; flex: none; overflow: visible; }
</style>

<style scoped>
* { box-sizing: border-box; }
.defs { position: absolute; }
.screen { width: 1920px; height: 1080px; display: flex; flex-direction: column; overflow: hidden; font: 15px/20px "Open Sans", "Noto Sans CJK SC", sans-serif; color: #000; white-space: nowrap; }
.screen span, .screen b, .screen em { display: inline-block; flex: none; font-style: normal; }
.titlebar { height: 29px; flex: none; display: flex; align-items: center; padding: 0 27px 1px 2px; color: #999; }
.caption { margin-left: 5px; }
.controls { margin-left: auto; display: flex; gap: 46px; }
.menubar { height: 46px; flex: none; display: flex; align-items: center; padding: 0 0 0 13px; border: 1px solid #e2e2e3; border-bottom: 2px solid #e3e4e6; }
.menus { display: flex; gap: 18px; width: 422px; padding-bottom: 2px; }
.bar { width: 1px; height: 28px; background: #c9c9c9; }
.tool.on { width: 31px; height: 36px; display: flex; align-items: center; justify-content: center; background: #ebecee; border: 1px solid #d6d7d9; border-radius: 4px; }

.work { height: 930px; flex: none; display: flex; background: #e3e4e6; }
.library { width: 200px; padding: 0 4px 3px; display: flex; flex-direction: column; }
.libhead { height: 30px; display: flex; align-items: center; justify-content: space-between; padding: 0 8px 1px 0; }
.libsearch { height: 26px; display: flex; align-items: center; gap: 11px; background: #fff; border: 1px solid #a3a5a8; padding: 0 5px 0 12px; color: #777; }
.libsearch > :last-child { margin-left: auto; }
.tree { margin-top: 9px; height: 861px; background: #fff; border: 1px solid #8b8f96; padding-top: 1px; }
.node { height: 22px; display: flex; align-items: center; }
.root { padding-left: 9px; gap: 8px; }
.root span { margin-left: -2px; }
.leaf { padding-left: 51px; gap: 4px; }
.leaf > span { margin-left: 2px; }
.sel { background: #f0f0f0; width: 99px; height: 22px; padding: 1px 0 0 2px; }
.share { padding-left: 31px; gap: 6px; }

.console { flex: 1; border: 1px solid #65656a; display: flex; flex-direction: column; }
.tabs { height: 40px; flex: none; padding: 6px 0 0 4px; }
.tab { width: 150px; height: 34px; background: #fff; border-right: 1px solid #aaa; border-radius: 5px 5px 0 0; display: flex; align-items: center; gap: 6px; padding: 0 9px 0 7px; font-size: 13px; }
.tab > :last-child { margin-left: auto; }
.viewport { flex: 1; background: #000; display: flex; padding-left: 139px; }
.guest { width: 1440px; height: 888px; position: relative; overflow: hidden; display: flex; flex-direction: column; }
.wall { position: absolute; left: 0; top: 24px; }
.panel { position: relative; z-index: 3; height: 24px; flex: none; display: flex; align-items: center; padding: 0 6px; background: linear-gradient(#5c5a50, #403f3a); color: #dfdbd2; box-shadow: 0 2px 5px rgba(30, 0, 0, .6); }
.appname { font-size: 14.500px; }
.indicators { margin-left: auto; display: flex; align-items: center; gap: 13px; }
.indicators span { padding-bottom: 1px; }
.indicators > :nth-child(2) { margin-left: 1px; }
.indicators > :nth-child(7) { margin-left: -7px; }
.launcher { position: relative; width: 65px; flex: 1; background: linear-gradient(90deg, #5f124f, #671456 70%, #5c0d4c); border-right: 1px solid #88477c; padding: 6px; display: flex; flex-direction: column; gap: 7px; overflow: hidden; }
.tile { width: 52px; height: 52px; flex: none; border-radius: 4px; background: radial-gradient(ellipse at 50% 0, rgba(255, 255, 255, .4), rgba(255, 255, 255, .1) 55%, rgba(255, 255, 255, .12)); box-shadow: inset 0 0 0 1px rgba(255, 255, 255, .2), 0 1px 4px rgba(30, 0, 30, .4); }
.tile.ubuntu { background: linear-gradient(#b875ad, #96247f 45%, #9b2084); }
.tile.files { background: linear-gradient(#b4656f, #8f3f50 55%, #86394c); }
.bottom { margin-top: 104px; }
.arr { position: absolute; top: 109px; border: 5px solid transparent; z-index: 2; }
.arr.l { left: 0; border-left-color: #ddd0da; border-right: 0; }
.arr.r { left: 59px; border-right-color: #ddd0da; border-left: 0; }

.window { position: absolute; left: 65px; top: 24px; width: 890px; height: 633px; display: flex; flex-direction: column; box-shadow: 0 8px 26px rgba(0, 0, 0, .75); border-radius: 7px 7px 0 0; color: #3c3c3c; font-size: 14.500px; }
.wtitle { height: 29px; display: flex; align-items: center; gap: 3px; padding-left: 8px; background: linear-gradient(#5c594f, #42413c); border-radius: 6px 6px 0 0; border-top: 1px solid #6c6a60; color: #dfdbd2; }
.wbtn { width: 16px; height: 16px; border-radius: 50%; background: linear-gradient(#908d84, #6c6a64); box-shadow: 0 0 0 1px rgba(30, 30, 25, .5); }
.wbtn svg { display: block; }
.wbtn.red { background: linear-gradient(#f58b64, #df4a1e); }
.wtitle b { margin-left: 8px; }
.wtools { height: 42px; display: flex; padding: 4px 7px 0; background: linear-gradient(#3c3b37, #54524a); border-bottom: 1px solid #403e38; color: #dfdbd2; }
.group { height: 33px; display: flex; border: 1px solid #34332f; border-radius: 5px; box-shadow: inset 0 0 0 1px rgba(255, 255, 255, .06); }
.group > span { height: 31px; display: flex; align-items: center; justify-content: center; }
.group > span + span { border-left: 1px solid #34332f; }
.nav { width: 66px; }
.nav span, .modes span { flex: 1 !important; }
.nav span { padding-right: 1px; }
.path { margin-left: 8px; width: 234px; }
.p1 { width: 31px; }
.p2 { width: 49px; }
.p3 { width: 49px; }
.group .p4 { flex: 1; }
.down { background: #3d3c38; }
.search { width: 34px; margin-left: auto; }
.search span { flex: 1 !important; padding-left: 1px; }
.modes { width: 66px; margin-left: 9px; }
.wbody { flex: 1; display: flex; background: #f2f1f0; }
.places { width: 190px; border: 1px solid #b9b7b3; padding-top: 4px; }
.place { height: 30px; display: flex; align-items: center; padding-left: 10px; gap: 10px; color: #4c4c4c; }
.places hr { border: 0; border-top: 1px solid #d4d2cf; border-bottom: 1px solid #fff; height: 2px; margin: 4px 0 3px; }
.place button { margin: 0 0 0 -6px; width: 28px; height: 26px; flex: none; border: 1px solid #b0aeaa; border-radius: 4px; background: linear-gradient(#fff, #eee); padding: 0; display: flex; align-items: center; justify-content: center; }
.filesview { margin-left: 6px; flex: 1; background: #fff; display: flex; padding: 16px 6px; }
.file { width: 154px; display: flex; flex-direction: column; align-items: center; }
.file span { margin-top: 1px; line-height: 20px; }
.mark { position: absolute; border: 2px solid #ed1c24; color: #ed1c24; font-size: 19px; }
.m1 { left: 214px; top: 75px; width: 168px; height: 135px; padding: 99px 0 0 38px; }
.m2 { left: 401px; top: 65px; width: 111px; height: 152px; padding: 102px 0 0 26px; }
.scroll { margin-left: 118px; width: 21px; background: #cdcdcd; border-left: 1px solid #fff; display: flex; flex-direction: column; justify-content: space-between; }
.thumb { flex: 1; }
.sbtn { height: 21px; background: #f0f0f0; display: flex; align-items: center; justify-content: center; }
.sbtn:last-child { height: 32px; padding-top: 10px; }

.status { height: 25px; flex: none; background: #f0f0f0; display: flex; align-items: center; padding: 0 27px 0 1px; border-top: 1px solid #fbfbfb; }
.devices { margin-left: auto; display: flex; align-items: center; }
.dbar { width: 1px; height: 21px; background: #999; }

.taskbar { height: 50px; flex: none; display: flex; background: linear-gradient(90deg, #34222a 0, #2d2729 26%, #25222f 35%, #24222e 55%, #282c32 62%, #241f2b 72%, #27222b 85%, #33262a 93%, #25222b); color: #fff; }
.start { width: 60px; display: flex; align-items: center; justify-content: center; }
.tsearch { width: 430px; background: #f2f2f2; border: 1px solid #c4c4c4; display: flex; align-items: center; gap: 14px; padding-left: 14px; color: #2b2b2b; font-size: 19px; }
.taskview { width: 63px; display: flex; align-items: center; padding-left: 20px; }
.app { width: 62px; display: flex; align-items: center; justify-content: center; border-bottom: 3px solid transparent; padding-top: 3px; }
.app.run { background: linear-gradient(#76b9ed, #76b9ed) 6px 100% / 51px 3px no-repeat border-box; }
.app.multi { background: linear-gradient(90deg, #76b9ed 40px, #5685b5 40px) 6px 100% / 51px 3px no-repeat border-box; }
.tray { margin-left: auto; display: flex; align-items: center; }
.temp { font-size: 20px; margin-left: 12px; }
.tray > :nth-child(3) { margin-left: 22px; }
.tray > :nth-child(4) { margin-left: 12px; }
.tray > :nth-child(5) { margin-left: 13px; }
.tray > :nth-child(6) { margin-left: 11px; }
.ime { margin-left: 8px; margin-right: 1px; font-size: 18px; font-weight: 500; }
.clock { margin-left: 8px; width: 84px; display: flex; flex-direction: column; align-items: center; line-height: 23px; padding-bottom: 1px; }
.tray > :nth-child(9) { margin-left: 20px; }
.peek { width: 1px; height: 50px; margin: 0 5px 0 14px; background: #777; }
</style>
